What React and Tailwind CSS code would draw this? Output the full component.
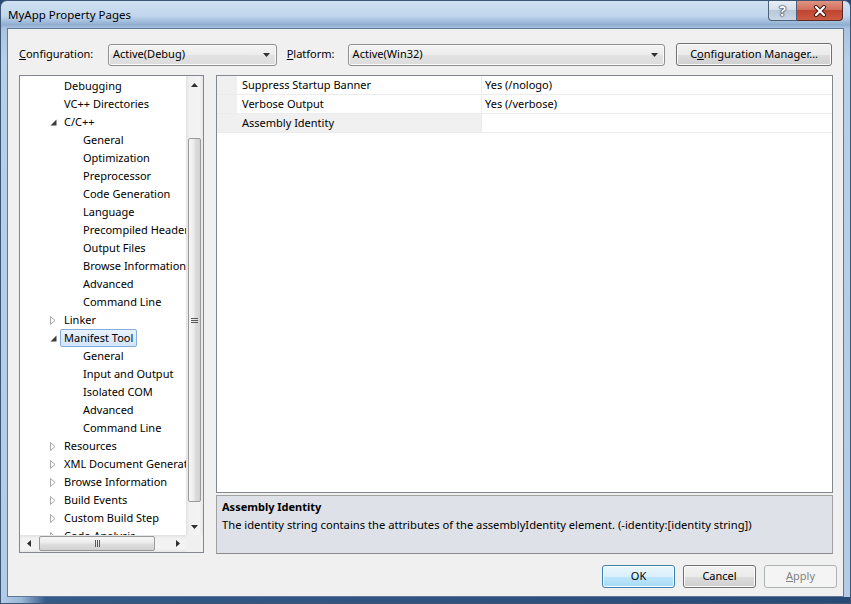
import React from "react";

const treeItems = [
  { label: "Debugging", level: 1 },
  { label: "VC++ Directories", level: 1 },
  { label: "C/C++", level: 1, toggle: "open" },
  { label: "General", level: 2 },
  { label: "Optimization", level: 2 },
  { label: "Preprocessor", level: 2 },
  { label: "Code Generation", level: 2 },
  { label: "Language", level: 2 },
  { label: "Precompiled Headers", level: 2 },
  { label: "Output Files", level: 2 },
  { label: "Browse Information", level: 2 },
  { label: "Advanced", level: 2 },
  { label: "Command Line", level: 2 },
  { label: "Linker", level: 1, toggle: "closed" },
  { label: "Manifest Tool", level: 1, toggle: "open", selected: true },
  { label: "General", level: 2 },
  { label: "Input and Output", level: 2 },
  { label: "Isolated COM", level: 2 },
  { label: "Advanced", level: 2 },
  { label: "Command Line", level: 2 },
  { label: "Resources", level: 1, toggle: "closed" },
  { label: "XML Document Generator", level: 1, toggle: "closed" },
  { label: "Browse Information", level: 1, toggle: "closed" },
  { label: "Build Events", level: 1, toggle: "closed" },
  { label: "Custom Build Step", level: 1, toggle: "closed" },
  { label: "Code Analysis", level: 1, toggle: "closed" },
];

const props = [
  { name: "Suppress Startup Banner", value: "Yes (/nologo)" },
  { name: "Verbose Output", value: "Yes (/verbose)" },
  { name: "Assembly Identity", value: "", selected: true },
];

function Expander({ state }) {
  if (state === "open") {
    return (
      <svg width="7" height="7" viewBox="0 0 7 7">
        <path d="M6.5 0.5 V6.5 H0.5 Z" fill="#3c3c3c" />
      </svg>
    );
  }
  return (
    <svg width="6" height="9" viewBox="0 0 6 9">
      <path d="M0.5 0.5 L5 4.5 L0.5 8.5 Z" fill="#ffffff" stroke="#a8a8a8" strokeWidth="1" />
    </svg>
  );
}

function TreeRow({ item }) {
  return (
    <div className="h-[18px] flex items-center whitespace-nowrap">
      {item.level === 1 ? (
        <>
          <div className="w-[28px] shrink-0" />
          <div className="w-[12px] shrink-0 flex items-center pl-[2px]">
            {item.toggle && <Expander state={item.toggle} />}
          </div>
        </>
      ) : (
        <div className="w-[59px] shrink-0" />
      )}
      <span
        className={
          item.selected
            ? "h-[18px] flex items-center px-[3px] rounded-[2px] border border-[#84acdd] bg-[linear-gradient(to_bottom,#e8f2fd_0%,#d3e5fa_100%)]"
            : "h-[18px] flex items-center px-[3px] border border-transparent"
        }
      >
        {item.label}
      </span>
    </div>
  );
}

function UpArrow() {
  return (
    <svg width="7" height="4" viewBox="0 0 7 4">
      <path d="M3.5 0 L7 4 H0 Z" fill="#303030" />
    </svg>
  );
}
function DownArrow() {
  return (
    <svg width="7" height="4" viewBox="0 0 7 4">
      <path d="M0 0 H7 L3.5 4 Z" fill="#303030" />
    </svg>
  );
}
function LeftArrow() {
  return (
    <svg width="4" height="7" viewBox="0 0 4 7">
      <path d="M4 0 V7 L0 3.5 Z" fill="#303030" />
    </svg>
  );
}
function RightArrow() {
  return (
    <svg width="4" height="7" viewBox="0 0 4 7">
      <path d="M0 0 L4 3.5 L0 7 Z" fill="#303030" />
    </svg>
  );
}

function VScrollBar() {
  return (
    <div className="w-[17px] shrink-0 flex flex-col bg-[linear-gradient(to_right,#e2e2e2_0%,#f1f1f1_20%,#f4f4f4_80%,#e6e6e6_100%)]">
      <div className="h-[17px] flex items-center justify-center">
        <UpArrow />
      </div>
      <div className="h-[45px]" />
      <div className="h-[364px] mx-[2px] rounded-[2px] border border-[#9a9a9a] bg-[linear-gradient(to_right,#f6f6f6_0%,#ececec_45%,#dedede_55%,#d2d2d2_100%)] flex items-center justify-center">
        <div className="flex flex-col gap-[1px]">
          <div className="w-[7px] h-[1px] bg-[#5a5a5a]" />
          <div className="w-[7px] h-[1px] bg-[#5a5a5a]" />
          <div className="w-[7px] h-[1px] bg-[#5a5a5a]" />
        </div>
      </div>
      <div className="flex-1" />
      <div className="h-[17px] flex items-center justify-center">
        <DownArrow />
      </div>
    </div>
  );
}

function HScrollBar() {
  return (
    <div className="flex-1 flex items-stretch bg-[linear-gradient(to_bottom,#e2e2e2_0%,#f1f1f1_20%,#f4f4f4_80%,#e6e6e6_100%)]">
      <div className="w-[17px] flex items-center justify-center">
        <LeftArrow />
      </div>
      <div className="w-[2px]" />
      <div className="w-[116px] my-[1px] rounded-[2px] border border-[#9a9a9a] bg-[linear-gradient(to_bottom,#f6f6f6_0%,#ececec_45%,#dedede_55%,#d2d2d2_100%)] flex items-center justify-center">
        <div className="flex gap-[1px]">
          <div className="w-[1px] h-[7px] bg-[#5a5a5a]" />
          <div className="w-[1px] h-[7px] bg-[#5a5a5a]" />
          <div className="w-[1px] h-[7px] bg-[#5a5a5a]" />
        </div>
      </div>
      <div className="flex-1" />
      <div className="w-[17px] flex items-center justify-center">
        <RightArrow />
      </div>
    </div>
  );
}

function Combo({ value, className }) {
  return (
    <div
      className={
        "h-[22px] flex items-center justify-between pl-[4px] pr-[6px] rounded-[3px] border border-[#8e8f8f] bg-[linear-gradient(to_bottom,#f4f4f4_0%,#ececec_50%,#e2e2e2_51%,#dcdcdc_100%)] shadow-[inset_0_0_0_1px_#fbfbfb] " +
        className
      }
    >
      <span>{value}</span>
      <DownArrow />
    </div>
  );
}

function PushButton({ children, className, variant }) {
  let look =
    "border-[#707070] bg-[linear-gradient(to_bottom,#f2f2f2_0%,#ebebeb_50%,#dddddd_51%,#cfcfcf_100%)] shadow-[inset_0_0_0_1px_#fcfcfc]";
  if (variant === "default") {
    look =
      "border-[#3c7fb1] bg-[linear-gradient(to_bottom,#eaf6fd_0%,#d9f0fc_50%,#bee6fd_51%,#a7d9f5_100%)] shadow-[inset_0_0_0_1px_#ffffff]";
  }
  if (variant === "disabled") {
    look = "border-[#adb2b5] bg-[#f4f4f4] text-[#838383]";
  }
  return (
    <div className={"h-[23px] flex items-center justify-center rounded-[3px] border " + look + " " + className}>
      {children}
    </div>
  );
}

export default function App() {
  return (
    <div className="w-[851px] h-[604px] overflow-hidden bg-[#2b4a72] font-['Noto_Sans','Open_Sans',sans-serif] text-[11px] text-black">
      <div className="relative w-[851px] h-[604px] flex flex-col rounded-t-[7px] border border-[#3d5676] bg-[linear-gradient(to_bottom,#cfe0f2_0px,#c0d6ed_15px,#8fadd0_24px,#a9c3e0_27px,#b8cfe8_60px,#b3cbe6_100%)]">
        {/* caption */}
        <div className="h-[27px] flex items-center pl-[7px] text-[11.5px] text-black">
          MyApp Property Pages
        </div>
        <div className="absolute top-0 right-[7px] flex">
          <div className="w-[29px] h-[20px] rounded-bl-[4px] border border-t-0 border-[#4f6179] bg-[linear-gradient(to_bottom,#e7eef6_0%,#d6e0ec_45%,#b9c8da_50%,#c9d6e4_100%)] flex items-center justify-center">
            <span className="text-white font-bold text-[14px] leading-none [text-shadow:0_0_1px_#1f2d40,0_0_1px_#1f2d40,0_0_2px_#1f2d40]">
              ?
            </span>
          </div>
          <div className="w-[46px] h-[20px] rounded-br-[4px] border border-l-0 border-t-0 border-[#5a2a22] bg-[linear-gradient(to_bottom,#e09484_0%,#d0705d_45%,#c0442f_50%,#cc5b45_100%)] flex items-center justify-center">
            <svg width="14" height="12" viewBox="0 0 14 12">
              <path d="M3 2 L11 10 M11 2 L3 10" stroke="#3b1810" strokeWidth="4" strokeLinecap="round" />
              <path d="M3 2 L11 10 M11 2 L3 10" stroke="#ffffff" strokeWidth="2.2" strokeLinecap="round" />
            </svg>
          </div>
        </div>

        {/* client area */}
        <div className="mx-[6px] h-[569px] border border-[#5f7898] bg-[#f0f0f0] flex flex-col">
          {/* configuration bar */}
          <div className="mt-[14px] h-[23px] pl-[11px] pr-[11px] flex items-center">
            <div className="w-[89px]">
              <u>C</u>onfiguration:
            </div>
            <Combo value="Active(Debug)" className="w-[169px]" />
            <div className="ml-[10px] w-[61px]">
              <u>P</u>latform:
            </div>
            <Combo value="Active(Win32)" className="w-[318px]" />
            <PushButton className="ml-[11px] w-[156px]">
              C<u>o</u>nfiguration Manager...
            </PushButton>
          </div>

          {/* panels */}
          <div className="mt-[9px] h-[479px] pl-[11px] flex items-start">
            {/* tree */}
            <div className="w-[185px] h-[478px] border border-[#828790] bg-white flex flex-col">
              <div className="flex-1 flex min-h-0">
                <div className="flex-1 overflow-hidden pt-[1px]">
                  {treeItems.map((item, i) => (
                    <TreeRow key={i} item={item} />
                  ))}
                </div>
                <VScrollBar />
              </div>
              <div className="h-[17px] flex">
                <HScrollBar />
                <div className="w-[17px] bg-[#f0f0f0]" />
              </div>
            </div>

            {/* property grid + description */}
            <div className="ml-[12px] w-[617px] h-[479px] flex flex-col">
              <div className="h-[418px] border border-[#828790] bg-white">
                {props.map((p, i) => (
                  <div key={i} className="h-[19px] flex border-b border-[#ececec]">
                    <div className="w-[20px] bg-[#f0f0f0]" />
                    <div
                      className={
                        "w-[245px] flex items-center pl-[5px] pt-[1px] border-r border-[#ececec] " +
                        (p.selected ? "bg-[#f0f0f0]" : "bg-white")
                      }
                    >
                      {p.name}
                    </div>
                    <div className="flex-1 flex items-center pl-[3px] pt-[1px]">{p.value}</div>
                  </div>
                ))}
              </div>
              <div className="mt-[2px] h-[59px] border border-[#a0a0a0] border-b-[#8a8a8a] bg-[#dfe1e8] pl-[5px] pt-[3px]">
                <div className="font-bold leading-[16px]">Assembly Identity</div>
                <div className="leading-[16px] mt-[2px] text-[11.2px]">
                  The identity string contains the attributes of the assemblyIdentity element. (-identity:[identity string])
                </div>
              </div>
            </div>
          </div>

          {/* dialog buttons */}
          <div className="mt-[11px] h-[23px] pr-[6px] flex justify-end gap-[8px]">
            <PushButton variant="default" className="w-[73px]">
              OK
            </PushButton>
            <PushButton className="w-[73px]">Cancel</PushButton>
            <PushButton variant="disabled" className="w-[73px]">
              <u>A</u>pply
            </PushButton>
          </div>
        </div>

        {/* bottom frame edge */}
        <div className="flex-1 bg-[linear-gradient(to_right,#b3cbe6_0px,#9db8d8_20px,#355a88_45px,#2a4a76_100%)]" />
      </div>
    </div>
  );
}
